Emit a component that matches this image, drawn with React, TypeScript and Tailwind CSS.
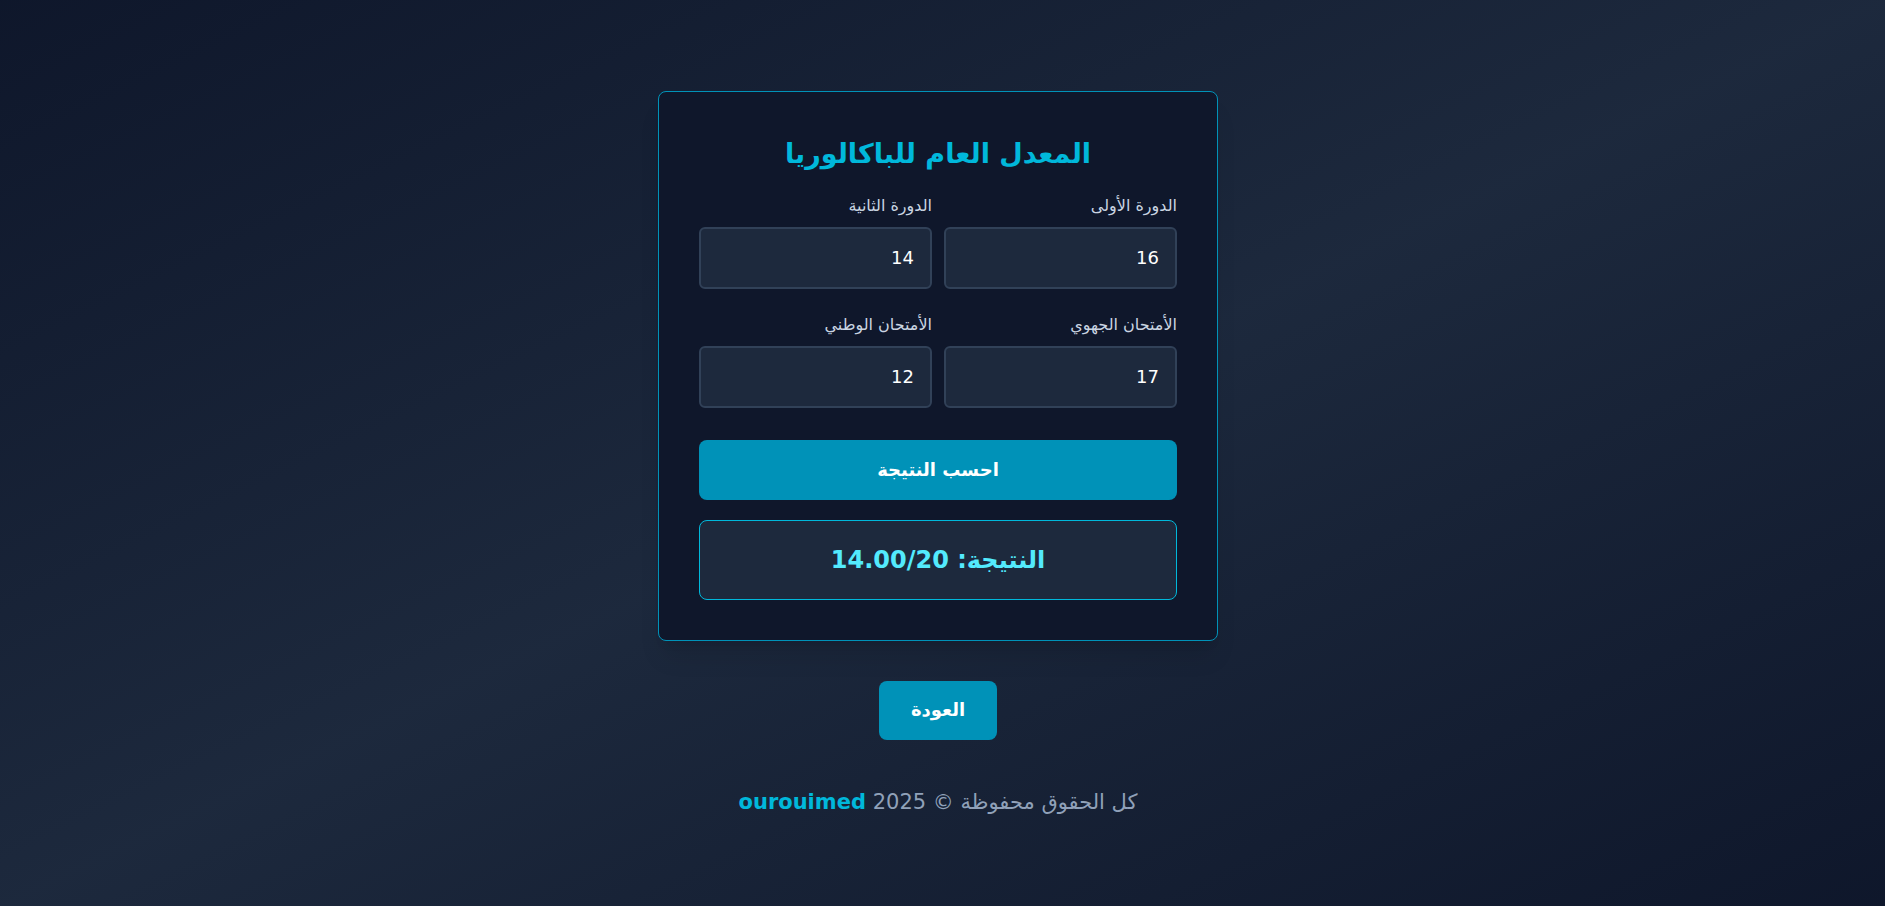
import React from "react";

const fields = [
  { label: "الدورة الأولى", value: "16" },
  { label: "الدورة الثانية", value: "14" },
  { label: "الأمتحان الجهوي", value: "17" },
  { label: "الأمتحان الوطني", value: "12" },
];

export default function App() {
  return (
    <div
      dir="rtl"
      className="min-h-screen w-full flex flex-col items-center justify-center bg-linear-to-br from-slate-900 via-slate-800 to-slate-900 pr-[9px]"
      style={{ fontFamily: '"DejaVu Sans", sans-serif' }}
    >
      <div className="w-full max-w-[560px] rounded-lg border border-cyan-600 bg-slate-900 p-10 shadow-xl">
        <h1 className="mb-[18px] text-center text-[27px] leading-[44px] font-bold text-cyan-500">المعدل العام للباكالوريا</h1>
        <div className="grid grid-cols-2 gap-x-3 gap-y-6">
          {fields.map((f) => (
            <div key={f.label} className="flex flex-col">
              <label className="mb-[9px] text-base leading-6 text-slate-300">{f.label}</label>
              <input
                type="number"
                defaultValue={f.value}
                className="h-[62px] rounded-md border-2 border-slate-700 bg-slate-800 px-4 text-lg text-white outline-none"
              />
            </div>
          ))}
        </div>
        <button className="mt-8 h-[60px] w-full rounded-lg bg-cyan-600 text-lg font-bold text-white">
          احسب النتيجة
        </button>
        <div className="mt-5 flex h-20 items-center justify-center rounded-lg border border-cyan-500 bg-slate-800">
          <span className="text-2xl font-bold text-cyan-300">النتيجة: 14.00/20</span>
        </div>
      </div>
      <button className="mt-10 h-[59px] rounded-lg bg-cyan-600 px-8 text-lg font-bold text-white">العودة</button>
      <p className="mt-12 text-[21px] leading-7 text-slate-400">
        كل الحقوق محفوظة © 2025 <span className="font-bold text-cyan-500">ourouimed</span>
      </p>
    </div>
  );
}
